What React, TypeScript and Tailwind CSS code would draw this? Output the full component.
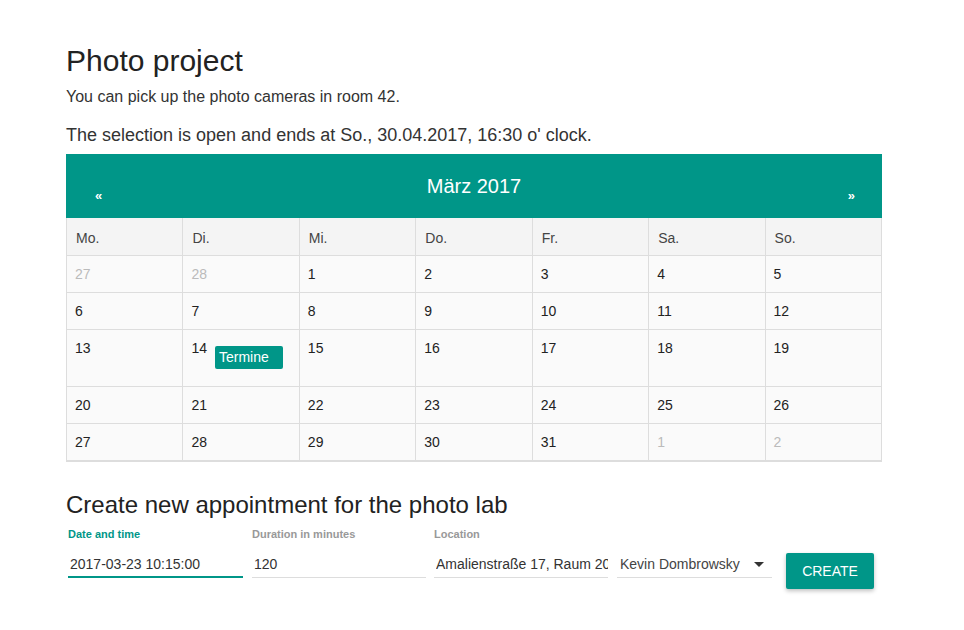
import { useState } from "react";

const days = ["Mo.", "Di.", "Mi.", "Do.", "Fr.", "Sa.", "So."];

type Cell = { n: number; muted?: boolean; badge?: string };

const weeks: Cell[][] = [
  [{ n: 27, muted: true }, { n: 28, muted: true }, { n: 1 }, { n: 2 }, { n: 3 }, { n: 4 }, { n: 5 }],
  [{ n: 6 }, { n: 7 }, { n: 8 }, { n: 9 }, { n: 10 }, { n: 11 }, { n: 12 }],
  [{ n: 13 }, { n: 14, badge: "Termine" }, { n: 15 }, { n: 16 }, { n: 17 }, { n: 18 }, { n: 19 }],
  [{ n: 20 }, { n: 21 }, { n: 22 }, { n: 23 }, { n: 24 }, { n: 25 }, { n: 26 }],
  [{ n: 27 }, { n: 28 }, { n: 29 }, { n: 30 }, { n: 31 }, { n: 1, muted: true }, { n: 2, muted: true }],
];

const App = () => {
  const [date, setDate] = useState("2017-03-23 10:15:00");
  const [duration, setDuration] = useState("120");
  const [location, setLocation] = useState("Amalienstraße 17, Raum 203");

  return (
    <div className="min-h-[630px] bg-white text-[#222] font-['Liberation_Sans',Arial,sans-serif]">
      <div className="w-[816px] ml-[66px] pt-[43px]">
        <h1 className="text-[30px] leading-[36px]">Photo project</h1>
        <p className="text-[16px] leading-[20px] mt-[8px] text-[#333]">You can pick up the photo cameras in room 42.</p>
        <p className="text-[18px] leading-[22px] mt-[17px] text-[#333]">
          The selection is open and ends at So., 30.04.2017, 16:30 o' clock.
        </p>

        <div className="mt-[8px]">
          <div className="h-[64px] bg-[#009688] text-white relative flex items-center justify-center">
            <span className="absolute left-[29px] top-[32px] text-[13px] font-bold">«</span>
            <span className="text-[20px] leading-[24px]">März 2017</span>
            <span className="absolute right-[27px] top-[32px] text-[13px] font-bold">»</span>
          </div>

          <div className="grid grid-cols-7 border-r border-[#ddd] border-b-2">
            {days.map((d) => (
              <div key={d} className="h-[37px] bg-[#f4f4f4] border-l border-[#ddd] pl-[9px] pt-[11px] text-[14px] leading-[18px] text-[#444]">
                {d}
              </div>
            ))}
            {weeks.map((w, wi) =>
              w.map((c, ci) => (
                <div
                  key={`${wi}-${ci}`}
                  className={`${wi === 2 ? "h-[57px]" : "h-[37px]"} bg-[#fafafa] border-l border-t border-[#ddd] pl-[8px] pt-[9px] flex items-start text-[14px] leading-[18px] ${c.muted ? "text-[#bbb]" : "text-[#222]"}`}
                >
                  <span>{c.n}</span>
                  {c.badge && (
                    <span className="ml-[8px] mt-[7px] w-[68px] h-[23px] bg-[#009688] text-white rounded-[2px] pl-[4px] leading-[23px] text-[14px]">
                      {c.badge}
                    </span>
                  )}
                </div>
              ))
            )}
          </div>
        </div>

        <h2 className="text-[24px] leading-[28px] mt-[29px]">Create new appointment for the photo lab</h2>

        <div className="flex items-start mt-[8px]">
          <div className="w-[175px] ml-[2px]">
            <div className="text-[11px] leading-[14px] font-bold text-[#009688]">Date and time</div>
            <input
              value={date}
              onChange={(e) => setDate(e.target.value)}
              className="w-full mt-[11px] h-[26px] pl-[2px] text-[14px] text-[#333] border-b-2 border-[#009688] outline-none bg-transparent"
            />
          </div>
          <div className="w-[174px] ml-[9px]">
            <div className="text-[11px] leading-[14px] font-bold text-[#999]">Duration in minutes</div>
            <input
              value={duration}
              onChange={(e) => setDuration(e.target.value)}
              className="w-full mt-[11px] h-[26px] pl-[2px] pb-[1px] text-[14px] text-[#333] border-b border-[#ddd] outline-none bg-transparent"
            />
          </div>
          <div className="w-[174px] ml-[8px]">
            <div className="text-[11px] leading-[14px] font-bold text-[#999]">Location</div>
            <input
              value={location}
              onChange={(e) => setLocation(e.target.value)}
              className="w-full mt-[11px] h-[26px] pl-[2px] pb-[1px] text-[14px] text-[#333] border-b border-[#ddd] outline-none bg-transparent"
            />
          </div>
          <div className="w-[155px] ml-[9px] mt-[25px] h-[26px] border-b border-[#ddd] flex items-center justify-between pl-[3px] pr-[8px] text-[14px] text-[#444]">
            <span>Kevin Dombrowsky</span>
            <svg width="10" height="5" viewBox="0 0 10 5">
              <path d="M0 0h10L5 5z" fill="#333" />
            </svg>
          </div>
          <button className="ml-[14px] mt-[26px] w-[88px] h-[36px] bg-[#009688] text-white text-[14px] rounded-[2px] shadow-[0_2px_4px_rgba(0,0,0,0.25)]">
            CREATE
          </button>
        </div>
      </div>
    </div>
  );
};

export default App;
